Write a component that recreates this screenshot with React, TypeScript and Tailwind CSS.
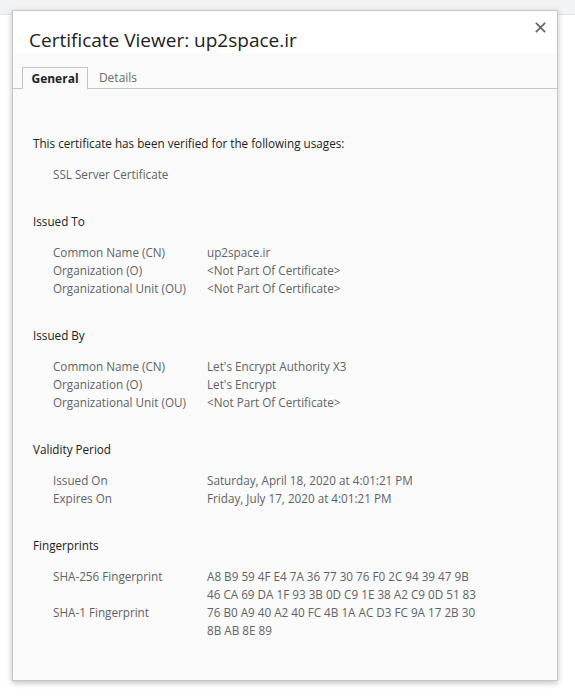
const font = { fontFamily: '"Open Sans", "Noto Sans", sans-serif' };

type Row = { label: string; value: string[] };

const sections: { title: string; rows: Row[] }[] = [
  {
    title: "Issued To",
    rows: [
      { label: "Common Name (CN)", value: ["up2space.ir"] },
      { label: "Organization (O)", value: ["<Not Part Of Certificate>"] },
      { label: "Organizational Unit (OU)", value: ["<Not Part Of Certificate>"] },
    ],
  },
  {
    title: "Issued By",
    rows: [
      { label: "Common Name (CN)", value: ["Let's Encrypt Authority X3"] },
      { label: "Organization (O)", value: ["Let's Encrypt"] },
      { label: "Organizational Unit (OU)", value: ["<Not Part Of Certificate>"] },
    ],
  },
  {
    title: "Validity Period",
    rows: [
      { label: "Issued On", value: ["Saturday, April 18, 2020 at 4:01:21 PM"] },
      { label: "Expires On", value: ["Friday, July 17, 2020 at 4:01:21 PM"] },
    ],
  },
  {
    title: "Fingerprints",
    rows: [
      {
        label: "SHA-256 Fingerprint",
        value: [
          "A8 B9 59 4F E4 7A 36 77 30 76 F0 2C 94 39 47 9B",
          "46 CA 69 DA 1F 93 3B 0D C9 1E 38 A2 C9 0D 51 83",
        ],
      },
      {
        label: "SHA-1 Fingerprint",
        value: ["76 B0 A9 40 A2 40 FC 4B 1A AC D3 FC 9A 17 2B 30", "8B AB 8E 89"],
      },
    ],
  },
];

export default function App() {
  return (
    <div className="relative h-[698px] w-[575px] overflow-hidden bg-white" style={font}>
      <div className="h-[15px] border-b border-[#e3e3e3] bg-[#f1f3f4]" />

      {/* dialog */}
      <div className="absolute left-[12px] top-[10px] flex h-[671px] w-[546px] flex-col border border-[#c6c6c6] bg-[#fafafa] shadow-[0_2px_6px_rgba(0,0,0,0.25)]">
        <div className="relative flex h-[42px] items-end bg-white pl-[16px]">
          <h1 className="text-[19px] leading-[25px] text-[#202124]">Certificate Viewer: up2space.ir</h1>
          <button className="absolute right-[9px] top-[8px] flex h-[16px] w-[16px] items-center justify-center text-[#5f6368]">
            <svg viewBox="0 0 12 12" className="h-[11px] w-[11px]" fill="none" stroke="currentColor" strokeWidth="1.8">
              <path d="M1 1 L11 11 M11 1 L1 11" />
            </svg>
          </button>
        </div>

        <div className="mt-[14px] flex h-[22px] border-b border-[#c4c4c4] pl-[9px] text-[12px]">
          <div className="-mb-px flex w-[66px] items-center justify-center border border-b-0 border-[#c4c4c4] bg-[#fafafa] font-bold text-[#202124]">
            General
          </div>
          <div className="flex w-[60px] items-center justify-center text-[#6b6b6b]">Details</div>
        </div>

        <div className="flex flex-col pl-[20px] text-[11.7px] leading-[18px]">
          <div className="mt-[45px] text-[#202124]">This certificate has been verified for the following usages:</div>
          <div className="mt-[13px] pl-[20px] text-[#5f6368]">SSL Server Certificate</div>

          {sections.map((s) => (
            <div key={s.title} className="mt-[29px] flex flex-col">
              <div className="text-[#202124]">{s.title}</div>
              <div className="mt-[13px] flex flex-col pl-[20px] text-[#5f6368]">
                {s.rows.map((r) => (
                  <div key={r.label} className="flex">
                    <div className="w-[154px] shrink-0">{r.label}</div>
                    <div className="flex flex-col">
                      {r.value.map((v) => (
                        <div key={v}>{v}</div>
                      ))}
                    </div>
                  </div>
                ))}
              </div>
            </div>
          ))}
        </div>
      </div>
    </div>
  );
}
